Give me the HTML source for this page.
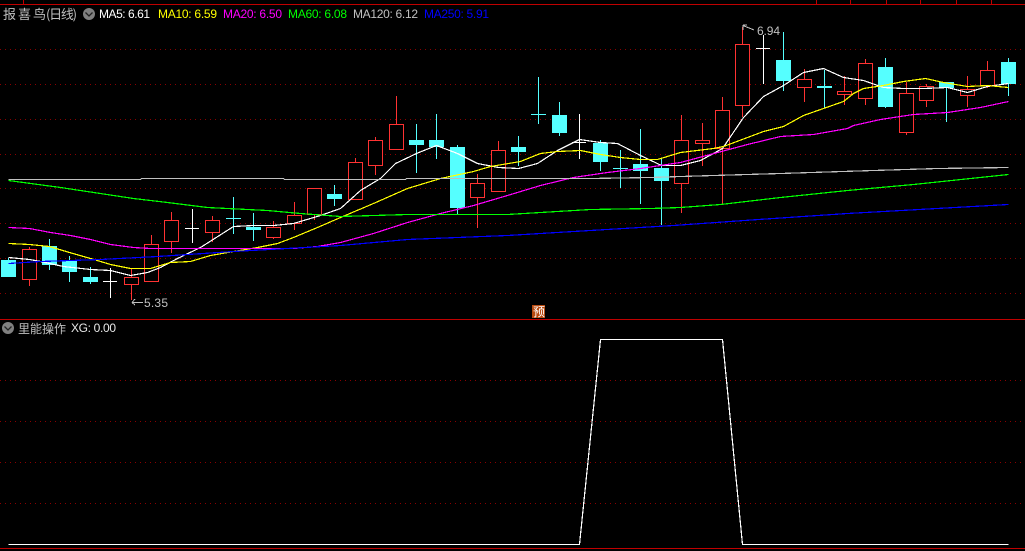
<!DOCTYPE html>
<html><head><meta charset="utf-8"><style>
html,body{margin:0;padding:0;background:#000;width:1025px;height:551px;overflow:hidden}
svg{display:block}
text{font-family:"Liberation Sans","WenQuanYi Zen Hei",sans-serif;font-size:12px}
.c{font-family:"WenQuanYi Zen Hei","Noto Sans CJK SC",sans-serif;font-size:13px}
</style></head><body>
<svg width="1025" height="551" viewBox="0 0 1025 551" xmlns="http://www.w3.org/2000/svg">
<g shape-rendering="crispEdges" fill="none">
<path d="M0 49.5H1025M0 84.5H1025M0 119.5H1025M0 154.5H1025M0 188.5H1025M0 223.5H1025M0 258.5H1025M0 293.5H1025M0 380.5H1025M0 421.5H1025M0 462.5H1025M0 503.5H1025" stroke="#8a0000" stroke-dasharray="1 4"/>
<path d="M0 4.5H1025M0 319.5H1025M0 548.5H1025" stroke="#c00000"/>
<path d="M23.5 0V4M816.5 0V4M850.5 0V4M886.5 0V4M920.5 0V4M956.5 0V4M991.5 0V4" stroke="#c00000"/>

<!-- red candles -->
<path stroke="#ff3232" fill="#000" d="M22.5 249.5h14v30h-14zM124.5 277.5h14v7h-14zM144.5 244.5h14v37h-14zM164.5 220.5h14v21h-14zM205.5 220.5h14v12h-14zM266.5 227.5h14v10h-14zM287.5 215.5h14v8h-14zM307.5 188.5h14v26h-14zM348.5 162.5h14v37h-14zM368.5 140.5h14v25h-14zM389.5 124.5h14v25h-14zM470.5 183.5h14v14h-14zM491.5 150.5h14v41h-14zM674.5 140.5h14v43h-14zM695.5 140.5h14v3h-14zM715.5 110.5h14v38h-14zM735.5 44.5h14v61h-14zM797.5 79.5h14v8h-14zM837.5 91.5h14v3h-14zM858.5 63.5h14v35h-14zM899.5 93.5h14v39h-14zM919.5 86.5h14v14h-14zM960.5 89.5h14v6h-14zM980.5 70.5h14v15h-14z"/>
<path stroke="#ff3232" d="M29.5 247V249M29.5 280V286M131.5 269V277M131.5 285V300M151.5 235V244M171.5 212V220M171.5 242V253M212.5 216V220M212.5 233V242M273.5 221V227M273.5 238V239M294.5 202V215M294.5 224V230M314.5 215V220M355.5 158V162M375.5 137V140M375.5 166V175M396.5 96V124M477.5 174V183M477.5 198V228M498.5 141V150M681.5 115V140M681.5 184V213M702.5 123V140M702.5 144V166M722.5 97V110M722.5 149V205M742.5 27V44M742.5 106V117M804.5 69V79M804.5 88V102M844.5 76V91M844.5 95V105M865.5 59V63M865.5 99V105M906.5 82V93M906.5 133V135M926.5 84V86M926.5 101V107M967.5 76V89M967.5 96V107M987.5 61V70M987.5 86V88"/>

<!-- cyan candles -->
<path stroke="#55ffff" d="M8.5 258V260M49.5 239V246M49.5 265V270M69.5 256V261M69.5 272V282M90.5 267V277M90.5 282V284M233.5 197V234M226 218.5H241M253.5 213V227M253.5 230V241M334.5 185V194M334.5 199V206M416.5 124V140M416.5 145V173M436.5 114V140M436.5 147V159M457.5 145V147M457.5 208V214M518.5 136V147M518.5 152V166M538.5 77V124M531 114.5H546M559.5 102V115M559.5 133V136M600.5 140V143M600.5 162V171M620.5 150V188M613 168.5H628M640.5 129V164M640.5 171V204M661.5 159V168M661.5 181V225M783.5 32V60M783.5 81V91M824.5 70V108M885.5 58V67M885.5 107V108M946.5 88V122M1008.5 58V62M1008.5 84V96"/>
<path fill="#55ffff" d="M1 260h15v17H1zM42 246h15v19H42zM62 261h15v11H62zM83 277h15v5H83zM246 227h15v3h-15zM327 194h15v5h-15zM409 140h15v5h-15zM429 140h15v7h-15zM450 147h15v61h-15zM511 147h15v5h-15zM552 115h15v18h-15zM593 143h15v19h-15zM633 164h15v7h-15zM654 168h15v13h-15zM776 60h15v21h-15zM817 86h15v2h-15zM878 67h15v40h-15zM939 82h15v6h-15zM1001 62h15v22h-15z"/>

<!-- white doji -->
<path stroke="#fff" d="M110.5 268V298M103 281.5H117M192.5 209V243M185 228.5H199M579.5 114V159M572 142.5H586M763.5 35V84M756 48.5H770"/>

<!-- MAs -->
<g transform="translate(.5 .5)" stroke-width="1.2">
<polyline stroke="#fff" points="8,257 29,259 40,261 63,266 90,269 110,270 130,275 147,272 160,267 177,258 200,247 233,226 253,225 273,225 293,223 320,215 340,208 360,190 380,178 395,163 416,153 436,145 457,153 477,163 498,167 518,168 537,163 557,150 579,139 600,142 617,143 640,155 661,165 680,165 700,160 722,148 743,117 763,96 783,85 803,72 823,68 843,77 863,80 883,87 903,88 923,88 947,87 967,92 987,86 1008,83"/>
<polyline stroke="#ffff00" points="8,243 29,244 49,246 69,252 90,258 110,264 130,268 150,268 170,262 190,261 210,255 233,251 257,247 277,243 293,237 317,227 340,217 373,203 407,188 440,178 473,171 490,166 520,161 540,153 557,151 580,150 600,154 620,157 640,159 657,159 680,152 713,148 723,146 747,137 763,131 783,126 803,115 823,108 843,101 853,93 863,88 883,85 903,81 925,78 943,82 967,86 987,85 1008,87"/>
<polyline stroke="#ff00ff" points="8,227 29,228 50,232 70,235 90,239 110,244 133,247 150,248 233,248 293,248 317,246 340,242 373,233 407,222 440,213 473,205 507,195 540,185 573,177 607,172 640,168 673,163 680,162 747,144 780,136 813,134 847,128 853,125 880,119 913,114 947,112 980,107 1008,101"/>
<polyline stroke="#00ff00" points="8,180 60,187 133,198 167,202 207,207 267,210 300,213 340,216 407,214 507,214 540,212 590,209 650,208 680,207 720,204 780,197 847,190 913,184 1008,174"/>
<polyline stroke="#c0c0c0" points="8,179 140,179 141,178 283,178 284,179 405,179 406,178 590,178 650,177 680,176 713,175 780,173 873,170 937,168 1008,167"/>
<polyline stroke="#0000ff" points="8,263 40,261 100,259 157,256 233,251 340,245 407,239 507,235 573,231 673,225 758,219 847,213 1008,204"/>
<polyline stroke="#fff" points="8,544 579,544 600,339 722,339 742,544 1008,544"/>
</g>

<!-- markers -->
<path stroke="#c0c0c0" d="M132 302.5H143M132 302.5L135 299M132 302.5L135 305"/>
<path stroke="#c0c0c0" d="M743 25.5L754 30M743 25V30M743 25H747"/>
<rect x="532" y="305" width="13" height="13" fill="#b84a10"/>
</g>

<text x="144" y="307" fill="#c0c0c0" textLength="24">5.35</text>
<text x="757" y="35" fill="#c0c0c0" textLength="23">6.94</text>
<text x="533" y="316" fill="#fff" class="c" style="font-size:12px">预</text>

<text x="3 18 33" y="19" fill="#c0c0c0" class="c">报喜鸟</text>
<text x="46" y="19" fill="#c0c0c0" class="c" textLength="31">(日线)</text>
<circle cx="89" cy="14" r="6" fill="#808080"/>
<path d="M85.5 12.5L89 16L92.5 12.5" stroke="#222" stroke-width="1.3" fill="none"/>
<text x="99" y="18" fill="#fff" textLength="51">MA5: 6.61</text>
<text x="158" y="18" fill="#ffff00" textLength="59">MA10: 6.59</text>
<text x="223" y="18" fill="#ff00ff" textLength="59">MA20: 6.50</text>
<text x="288" y="18" fill="#00ff00" textLength="59">MA60: 6.08</text>
<text x="353" y="18" fill="#c0c0c0" textLength="65">MA120: 6.12</text>
<text x="424" y="18" fill="#0000ff" textLength="65">MA250: 5.91</text>

<circle cx="8" cy="328" r="6" fill="#808080"/>
<path d="M4.5 326.5L8 330L11.5 326.5" stroke="#222" stroke-width="1.3" fill="none"/>
<text x="18 30 42 54" y="333" fill="#c0c0c0" class="c" style="font-size:12px">里能操作</text>
<text x="71" y="332" fill="#e8e8e8" textLength="45">XG: 0.00</text>
</svg>
</body></html>
